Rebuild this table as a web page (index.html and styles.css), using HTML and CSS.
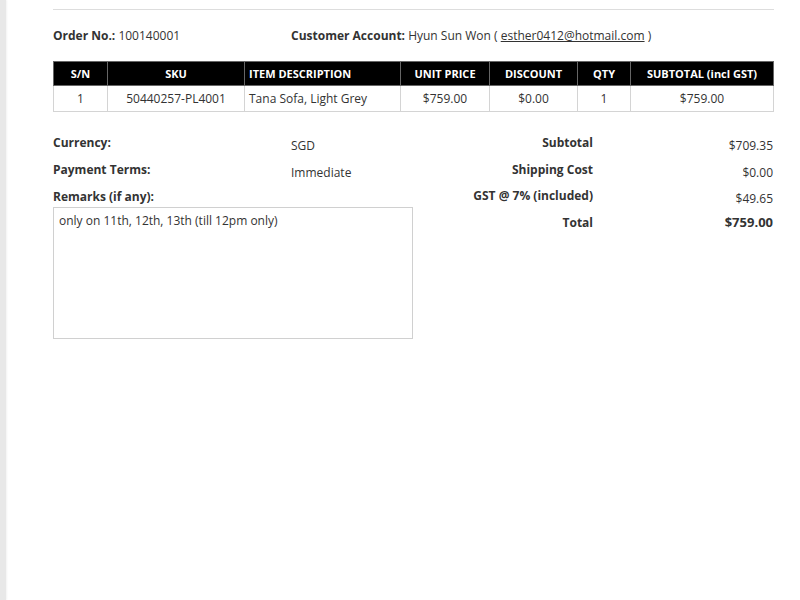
FILE: index.html
```html
<!DOCTYPE html>
<html>
<head>
<meta charset="utf-8">
<link rel="stylesheet" href="styles.css">
</head>
<body>
<div class="page">
  <div class="strip"></div>
  <main class="content">
    <hr class="rule">
    <div class="meta">
      <div class="meta-order"><b>Order No.:</b> 100140001</div>
      <div class="meta-customer"><b>Customer Account:</b> Hyun Sun Won ( <a class="mail" href="#">esther0412@hotmail.com</a> )</div>
    </div>
    <table class="items">
      <colgroup>
        <col class="c-sn"><col class="c-sku"><col class="c-desc"><col class="c-price"><col class="c-disc"><col class="c-qty"><col class="c-sub">
      </colgroup>
      <thead>
        <tr>
          <th>S/N</th><th>SKU</th><th class="left">ITEM DESCRIPTION</th><th>UNIT PRICE</th><th>DISCOUNT</th><th>QTY</th><th>SUBTOTAL (incl GST)</th>
        </tr>
      </thead>
      <tbody>
        <tr>
          <td>1</td><td>50440257-PL4001</td><td class="left">Tana Sofa, Light Grey</td><td>$759.00</td><td>$0.00</td><td>1</td><td>$759.00</td>
        </tr>
      </tbody>
    </table>
    <div class="summary">
      <div class="info">
        <div class="row"><div class="lbl">Currency:</div><div class="val">SGD</div></div>
        <div class="row"><div class="lbl">Payment Terms:</div><div class="val">Immediate</div></div>
        <div class="lbl remarks-lbl">Remarks (if any):</div>
        <div class="remarks">only on 11th, 12th, 13th (till 12pm only)</div>
      </div>
      <div class="totals">
        <div class="row"><div class="lbl">Subtotal</div><div class="val">$709.35</div></div>
        <div class="row"><div class="lbl">Shipping Cost</div><div class="val">$0.00</div></div>
        <div class="row"><div class="lbl">GST @ 7% (included)</div><div class="val">$49.65</div></div>
        <div class="row total"><div class="lbl">Total</div><div class="val">$759.00</div></div>
      </div>
    </div>
  </main>
</div>
</body>
</html>
```

FILE: styles.css
```css
html, body {
  margin: 0;
  padding: 0;
  background: #fff;
}
body {
  font-family: "Open Sans", "Noto Sans", sans-serif;
  font-size: 12px;
  line-height: 18px;
  color: #333;
}
.page {
  display: flex;
  min-height: 600px;
}
.strip {
  width: 6px;
  flex: none;
  background: #e8e8e8;
  box-shadow: 1px 0 2px rgba(0,0,0,0.05);
}
.content {
  flex: 1;
  padding: 9px 27px 0 47px;
}
.rule {
  margin: 0;
  border: 0;
  border-top: 1px solid #ddd;
  height: 0;
}
.meta {
  display: flex;
  margin-top: 17px;
}
.meta-order {
  width: 238px;
}
.mail {
  color: #333;
  text-decoration: underline;
}
.items {
  width: 720px;
  margin-top: 16px;
  border-collapse: collapse;
  table-layout: fixed;
}
.c-sn { width: 54px; }
.c-sku { width: 137px; }
.c-desc { width: 156px; }
.c-price { width: 89px; }
.c-disc { width: 88px; }
.c-qty { width: 53px; }
.c-sub { width: 143px; }
.items th {
  background: #000;
  color: #fff;
  font-size: 11px;
  font-weight: 700;
  height: 23px;
  padding: 0 4px;
  text-align: center;
  border: 1px solid #666;
  white-space: nowrap;
}
.items td {
  height: 25px;
  padding: 0 4px;
  text-align: center;
  border: 1px solid #d4d4d4;
  white-space: nowrap;
}
.items .left {
  text-align: left;
}
.summary {
  display: flex;
  margin-top: 22px;
}
.info {
  width: 360px;
}
.info .row {
  display: grid;
  grid-template-columns: 238px 1fr;
  height: 27px;
}
.lbl {
  font-weight: 700;
}
.val {
  padding-top: 3px;
}
.remarks-lbl {
  height: 19px;
}
.remarks {
  box-sizing: border-box;
  height: 132px;
  border: 1px solid #d0d0d0;
  padding: 4px 5px;
}
.totals {
  width: 360px;
}
.totals .row {
  display: grid;
  grid-template-columns: 1fr 180px;
  height: 26.5px;
}
.totals .lbl {
  text-align: right;
}
.totals .val {
  text-align: right;
}
.totals .total .val {
  font-weight: 700;
  font-size: 13px;
  padding-top: 0;
  margin-top: -1px;
}
```
